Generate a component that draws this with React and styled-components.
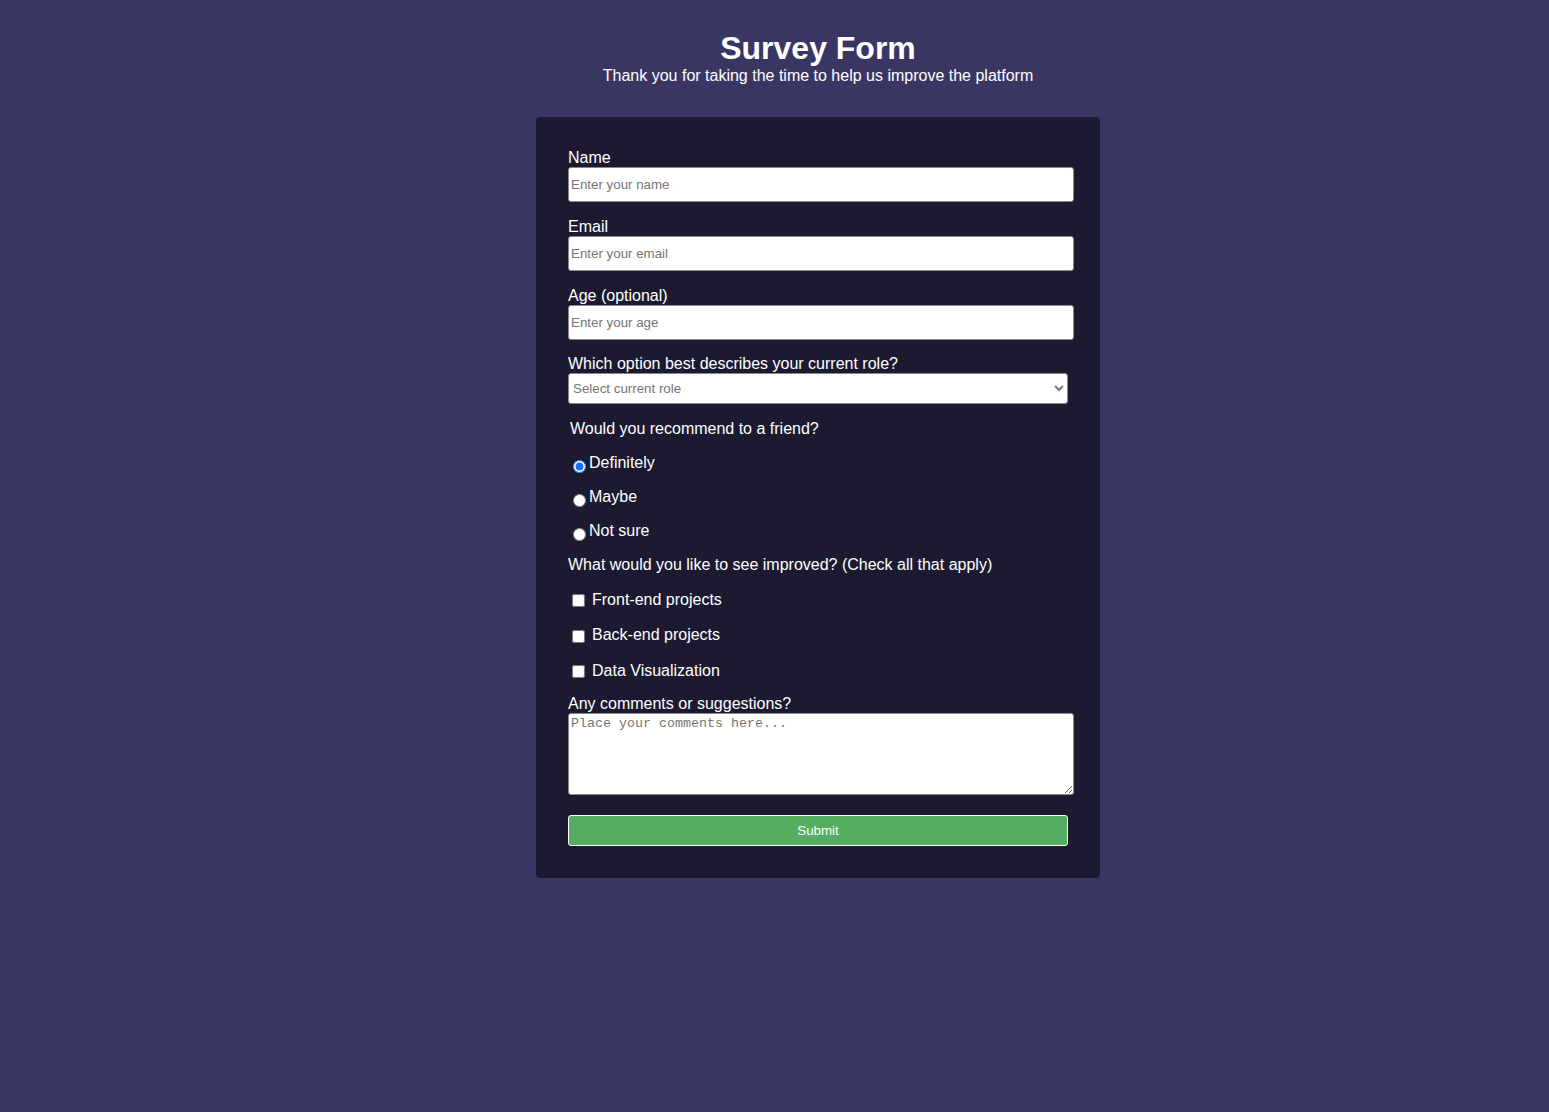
import React from 'react';
import styled, { createGlobalStyle } from 'styled-components';

const GlobalStyle = createGlobalStyle`
  html, body {
    margin: 0;
    padding: 0;
    background-color: #3a3664;
    font-family: "Liberation Sans", Arial, Helvetica, sans-serif;
    color: #ffffff;
  }
`;

// Page wrapper (content sits slightly right of centre, as in the original)
const Page = styled.div`
  min-height: 1112px;
  padding-top: 30px;
  padding-left: 87px;
  box-sizing: border-box;
`;

const Header = styled.header`
  text-align: center;
  margin-bottom: 32px;
`;

const Title = styled.h1`
  margin: 0;
  font-size: 32px;
  line-height: 36px;
  font-weight: 700;
`;

const Subtitle = styled.p`
  margin: 1px 0 0;
  font-size: 16px;
  line-height: 18px;
`;

// Card holding the form
const Card = styled.form`
  width: 564px;
  margin: 0 auto;
  box-sizing: border-box;
  padding: 32px;
  background-color: #1c1a31;
  border-radius: 4px;
`;

const Field = styled.div`
  margin-bottom: ${p => (p.gap === undefined ? 16 : p.gap)}px;
`;

const Label = styled.label`
  display: block;
  font-size: 16px;
  line-height: 18px;
`;

const TextInput = styled.input`
  display: block;
  width: 100%;
  height: 33px;
  padding: 0 2px;
  margin: 0;
  border: 1px solid #8a8a8a;
  border-radius: 3px;
  background: #ffffff;
  font-family: "Liberation Sans", Arial, sans-serif;
  font-size: 13.33px;
  color: #222;
  outline: none;
  &::placeholder {
    color: #757575;
  }
`;

const Select = styled.select`
  display: block;
  width: 100%;
  height: 31px;
  margin: 0;
  padding: 0;
  border: 1px solid #8a8a8a;
  border-radius: 3px;
  background: #ffffff;
  font-family: "Liberation Sans", Arial, sans-serif;
  font-size: 13.33px;
  color: #757575;
`;

const Row = styled.div`
  display: flex;
  align-items: center;
  height: ${p => p.h || 34}px;
  padding-left: ${p => p.indent || 0}px;
  font-size: 16px;
`;

const Radio = styled.input.attrs({ type: 'radio' })`
  width: 13px;
  height: 13px;
  margin: 6px 3px 0 5px;
  accent-color: #1a6dff;
`;

const Checkbox = styled.input.attrs({ type: 'checkbox' })`
  width: 13px;
  height: 13px;
  margin: 2px 7px 0 4px;
`;

const Options = styled.div`
  margin-top: 8px;
  margin-bottom: 6px;
`;

const TextArea = styled.textarea`
  display: block;
  width: 100%;
  height: 76px;
  margin: 0;
  padding: 2px;
  border: 1px solid #8a8a8a;
  border-radius: 3px;
  font-family: "Liberation Mono", "Courier New", monospace;
  font-size: 13.33px;
  &::placeholder {
    color: #757575;
  }
`;

const Submit = styled.button`
  display: block;
  width: 100%;
  height: 31px;
  margin-top: 20px;
  border: 1px solid #ffffff;
  border-radius: 3px;
  background-color: #55ae5f;
  color: #ffffff;
  font-family: "Liberation Sans", Arial, sans-serif;
  font-size: 13.33px;
  cursor: pointer;
`;

const radios = ['Definitely', 'Maybe', 'Not sure'];
const checks = ['Front-end projects', 'Back-end projects', 'Data Visualization'];

export default function App() {
  return (
    <Page>
      <GlobalStyle />
      <Header>
        <Title>Survey Form</Title>
        <Subtitle>Thank you for taking the time to help us improve the platform</Subtitle>
      </Header>
      <Card onSubmit={e => e.preventDefault()}>
        <Field>
          <Label htmlFor="name">Name</Label>
          <TextInput id="name" placeholder="Enter your name" />
        </Field>
        <Field>
          <Label htmlFor="email">Email</Label>
          <TextInput id="email" placeholder="Enter your email" />
        </Field>
        <Field gap={15}>
          <Label htmlFor="age">Age (optional)</Label>
          <TextInput id="age" placeholder="Enter your age" />
        </Field>
        <Field gap={0}>
          <Label htmlFor="role">Which option best describes your current role?</Label>
          <Select id="role" defaultValue="">
            <option value="" disabled>Select current role</option>
            <option>Student</option>
            <option>Full Time Job</option>
            <option>Prefer not to say</option>
          </Select>
        </Field>
        <Options>
          <Row indent={2}>Would you recommend to a friend?</Row>
          {radios.map((r, i) => (
            <Row key={r} as="label">
              <Radio name="recommend" defaultChecked={i === 0} />
              {r}
            </Row>
          ))}
          <Row>What would you like to see improved? (Check all that apply)</Row>
          {checks.map(c => (
            <Row key={c} as="label" h={35.5}>
              <Checkbox />
              {c}
            </Row>
          ))}
        </Options>
        <Field gap={0}>
          <Label htmlFor="comments">Any comments or suggestions?</Label>
          <TextArea id="comments" placeholder="Place your comments here..." />
        </Field>
        <Submit type="submit">Submit</Submit>
      </Card>
    </Page>
  );
}
